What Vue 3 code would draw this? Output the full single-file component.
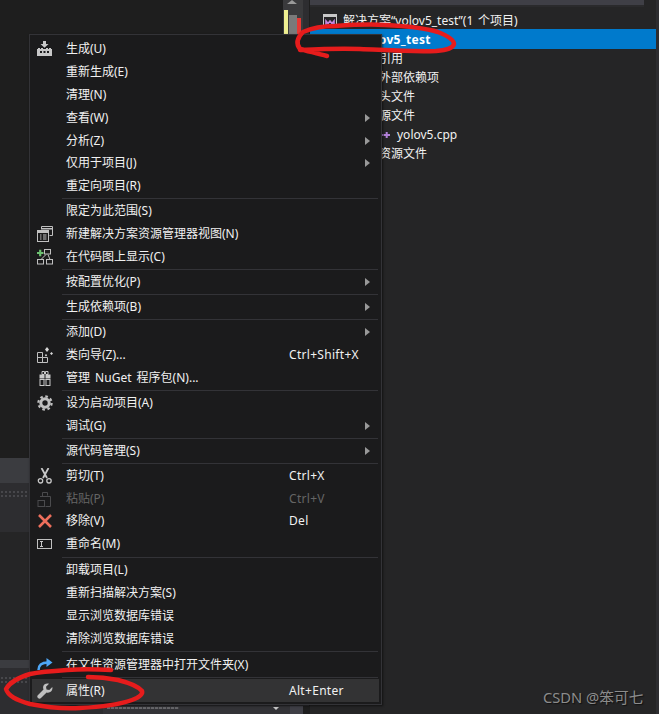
<script setup>
const groups = [
  [
    { label: '生成(U)', icon: 'build' },
    { label: '重新生成(E)' },
    { label: '清理(N)' },
    { label: '查看(W)', sub: true },
    { label: '分析(Z)', sub: true },
    { label: '仅用于项目(J)', sub: true },
    { label: '重定向项目(R)' },
  ],
  [
    { label: '限定为此范围(S)' },
    { label: '新建解决方案资源管理器视图(N)', icon: 'view' },
    { label: '在代码图上显示(C)', icon: 'map' },
  ],
  [{ label: '按配置优化(P)', sub: true }],
  [{ label: '生成依赖项(B)', sub: true }],
  [
    { label: '添加(D)', sub: true },
    { label: '类向导(Z)...', icon: 'wizard', key: 'Ctrl+Shift+X' },
    { label: '管理 NuGet 程序包(N)...', icon: 'gift' },
  ],
  [
    { label: '设为启动项目(A)', icon: 'gear' },
    { label: '调试(G)', sub: true },
  ],
  [{ label: '源代码管理(S)', sub: true }],
  [
    { label: '剪切(T)', icon: 'cut', key: 'Ctrl+X' },
    { label: '粘贴(P)', icon: 'paste', key: 'Ctrl+V', disabled: true },
    { label: '移除(V)', icon: 'remove', key: 'Del' },
    { label: '重命名(M)', icon: 'rename' },
  ],
  [
    { label: '卸载项目(L)' },
    { label: '重新扫描解决方案(S)' },
    { label: '显示浏览数据库错误' },
    { label: '清除浏览数据库错误' },
  ],
  [{ label: '在文件资源管理器中打开文件夹(X)', icon: 'open' }],
  [{ label: '属性(R)', icon: 'wrench', key: 'Alt+Enter', active: true }],
]

const tree = [
  { label: '解决方案“volov5_test”(1 个项目)', cls: 'solution', icon: 'sln' },
  { label: 'yolov5_test', cls: 'project', icon: 'proj' },
  { label: '引用', cls: 'child' },
  { label: '外部依赖项', cls: 'child' },
  { label: '头文件', cls: 'child' },
  { label: '源文件', cls: 'child' },
  { label: 'yolov5.cpp', cls: 'cpp', icon: 'cpp' },
  { label: '资源文件', cls: 'child' },
]
</script>

<template>
  <div class="app">
    <div class="left">
      <div class="editor-row">
        <div class="editor"></div>
        <div class="scroll">
          <span class="scroll-up"></span>
          <span class="mark yellow"></span>
          <span class="mark grey"></span>
          <span class="mark red"></span>
        </div>
        <div class="scroll-gap"></div>
      </div>
      <div class="tab-light tall"></div>
      <div class="panel-mid"><div class="dots"></div></div>
      <div class="panel-dark"></div>
      <div class="tab-light short"></div>
      <div class="panel-end">
        <div class="dots second"></div>
        <div class="combo-row">
          <div class="combo">
            <span class="combo-text"></span>
            <span class="combo-arrow"></span>
          </div>
          <div class="combo-btn"></div>
          <div class="combo-gap"></div>
        </div>
      </div>
    </div>

    <div class="explorer">
      <div class="explorer-top"></div>
      <div class="tree">
        <div v-for="row in tree" :key="row.label" class="tree-row" :class="row.cls">
          <svg v-if="row.icon === 'sln'" class="tree-icon" width="14" height="14" viewBox="0 0 14 14">
            <rect x="0.5" y="0.5" width="13" height="13" fill="#252526" stroke="#c8c8c8" />
            <rect x="0.5" y="0.5" width="13" height="2.5" fill="#c8c8c8" />
            <path d="M3 12V7l2 2.5L7 7l2 2.5L11 7v5" fill="none" stroke="#c586e0" stroke-width="1.6" />
          </svg>
          <svg v-else-if="row.icon === 'proj'" class="tree-icon" width="16" height="16" viewBox="0 0 16 16">
            <rect x="0.5" y="3.5" width="15" height="12" fill="#0e6ab0" stroke="#26262a" />
            <rect x="1" y="3" width="14" height="1.5" fill="#c586c0" />
          </svg>
          <svg v-else-if="row.icon === 'cpp'" class="tree-icon" width="16" height="16" viewBox="0 0 16 16">
            <path d="M1 8h4M3 6v4M5.5 8h6.5M8.7 5v6" stroke="#b180d7" stroke-width="2" fill="none" />
          </svg>
          <span class="tree-label">{{ row.label }}</span>
        </div>
      </div>
    </div>

    <div class="menu">
      <template v-for="(group, gi) in groups" :key="gi">
        <div v-if="gi > 0" class="sep" :class="{ wide: gi >= 8 }"></div>
        <div
          v-for="item in group"
          :key="item.label"
          class="item"
          :class="{ active: item.active, disabled: item.disabled }"
        >
          <span class="ico">
            <svg v-if="item.icon === 'build'" width="16" height="16" viewBox="0 0 16 16">
              <path d="M6 0h3v3h2.5L7.5 6.8 3.5 3H6z" fill="#c8c8c8" />
              <path d="M0 8h1V7h2v1h1V7h2v1h3V7h2v1h1V7h2v1h1v7H0z" fill="#c8c8c8" />
              <rect x="3" y="10" width="2" height="2" fill="#1b1b1c" />
              <rect x="6.5" y="10" width="2" height="2" fill="#1b1b1c" />
              <rect x="10" y="10" width="2" height="2" fill="#1b1b1c" />
            </svg>
            <svg v-else-if="item.icon === 'view'" width="16" height="16" viewBox="0 0 16 16">
              <path d="M4.5 3.5V.5h11v9h-3" fill="none" stroke="#c0c0c0" />
              <rect x="5" y="2" width="10" height="1.5" fill="#c0c0c0" />
              <rect x="0.5" y="4.5" width="11" height="11" fill="#1b1b1c" stroke="#c0c0c0" />
              <rect x="1" y="5" width="10" height="2" fill="#c0c0c0" />
              <path d="M3 9h1.5M6 9h3.5M3 11h1.5M6 11h3.5M3 13h1.5M6 13h3.5" stroke="#c0c0c0" />
            </svg>
            <svg v-else-if="item.icon === 'map'" width="16" height="16" viewBox="0 0 16 16">
              <path d="M0 4h6.5M3.2 .8v6.4" stroke="#6cc070" stroke-width="2.2" />
              <rect x="7.5" y="0.5" width="6" height="4.5" fill="none" stroke="#c0c0c0" />
              <rect x="0.5" y="10.5" width="6" height="4.5" fill="none" stroke="#c0c0c0" />
              <rect x="9.5" y="10.5" width="6" height="4.5" fill="none" stroke="#c0c0c0" />
              <path d="M9 5.5 4 10.5M11 5.5l2 5" fill="none" stroke="#c0c0c0" />
            </svg>
            <svg v-else-if="item.icon === 'wizard'" width="16" height="16" viewBox="0 0 16 16">
              <path d="M.5 15.5v-10h5v5h5v5zM.5 10.5h5v5" fill="none" stroke="#c0c0c0" />
              <path d="M10 0l2 2.5L10 5 8 2.5zM14.5 5l1.5 1.5-1.5 1.5L13 6.5zM9 7l1.2 1.2L9 9.4 7.8 8.2z" fill="#d8d8d8" />
            </svg>
            <svg v-else-if="item.icon === 'gift'" width="16" height="16" viewBox="0 0 16 16">
              <path d="M5 1.5h2.5v3H5zM8.5 1.5H11v3H8.5z" fill="none" stroke="#c8c8c8" />
              <rect x="2.5" y="4.5" width="11" height="4" fill="#c8c8c8" />
              <rect x="3" y="9.5" width="10" height="6" fill="none" stroke="#c8c8c8" />
              <path d="M8 4v12" stroke="#1b1b1c" />
              <path d="M7 9v6.5M9 9v6.5" stroke="#c8c8c8" />
            </svg>
            <svg v-else-if="item.icon === 'gear'" width="16" height="16" viewBox="0 0 16 16">
              <circle cx="8" cy="8" r="4.2" fill="none" stroke="#c0c0c0" stroke-width="3" />
              <circle cx="8" cy="8" r="6.6" fill="none" stroke="#c0c0c0" stroke-width="2.2" stroke-dasharray="2.6 2.6" />
            </svg>
            <svg v-else-if="item.icon === 'cut'" width="16" height="16" viewBox="0 0 16 16">
              <path d="M4.5 0 10 10M11.5 0 6 10" fill="none" stroke="#c8c8c8" stroke-width="1.8" />
              <circle cx="3.5" cy="12.8" r="2.2" fill="none" stroke="#c8c8c8" stroke-width="1.3" />
              <circle cx="12" cy="12.8" r="2.2" fill="none" stroke="#c8c8c8" stroke-width="1.3" />
            </svg>
            <svg v-else-if="item.icon === 'paste'" width="16" height="16" viewBox="0 0 16 16">
              <path d="M5.5 5.5v-4h5v3M3 5.5h10.500v10h-5" fill="none" stroke="#4b4b4d" />
              <rect x="1" y="9.500" width="6.500" height="6" fill="none" stroke="#4b4b4d" />
            </svg>
            <svg v-else-if="item.icon === 'remove'" width="16" height="16" viewBox="0 0 16 16">
              <path d="M2 2l12 12M14 2 2 14" stroke="#ee6f5c" stroke-width="2.600" />
            </svg>
            <svg v-else-if="item.icon === 'rename'" width="16" height="16" viewBox="0 0 16 16">
              <rect x="0.500" y="3.500" width="14" height="9" fill="none" stroke="#c0c0c0" />
              <path d="M3 5.500h3M3 10.500h3M4.500 5.500v5" stroke="#c8c8c8" />
            </svg>
            <svg v-else-if="item.icon === 'open'" width="16" height="16" viewBox="0 0 16 16">
              <path d="M1.500 13C1.500 8 5 5.500 11 5.500" fill="none" stroke="#4ea6f5" stroke-width="2.500" />
              <path d="M9.500 1 15.500 5.500 9.500 10z" fill="#4ea6f5" />
            </svg>
            <svg v-else-if="item.icon === 'wrench'" width="16" height="16" viewBox="0 0 16 16">
              <path d="M15.300 4 12.300 7 9.500 6.500 9 3.700 12 .7C9.500-.2 6.700 1 6.200 3.500 6 4.600 6.100 5.500 6.500 6.400L1 12a2.100 2.100 0 0 0 3 3l5.600-5.500c2.800 1 6.700-1.200 5.700-5.500z" fill="#c0c0c0" />
            </svg>
          </span>
          <span class="label">{{ item.label }}</span>
          <span v-if="item.key" class="key">{{ item.key }}</span>
          <span v-if="item.sub" class="arrow"></span>
        </div>
      </template>
    </div>

    <svg class="ink" width="659" height="714" viewBox="0 0 659 714">
      <path d="M327 56C316 53 307 51 300 49C296 44 297 38 303 32C312 28 322 26 335 26C350 25 368 24 385 25C405 26 425 28 438 32C448 36 454 40 454 44C453 48 448 50 436 51C410 52 385 50 360 49C340 48 320 49 300 50" />
      <path d="M111 670C95 669 80 669 67 670C52 671 40 672 30 674C20 677 10 682 6 689C8 696 16 700 30 704C45 707 60 709 80 708C100 707 118 705 132 700C140 697 143 694 142 691C138 686 130 683 118 680C108 678 98 677 88 677" />
    </svg>

    <div class="watermark">CSDN @笨可七</div>
  </div>
</template>

<style scoped>
.app {
  position: relative;
  width: 659px;
  height: 714px;
  overflow: hidden;
  display: flex;
  background: #252526;
  font-family: "Noto Sans", "Noto Sans CJK SC", sans-serif;
  font-size: 12px;
}
.left {
  width: 310px;
  height: 714px;
  display: flex;
  flex-direction: column;
  flex: none;
}
.editor-row {
  height: 458px;
  display: flex;
  flex: none;
}
.editor {
  width: 283px;
  background: #1e1e1e;
}
.scroll {
  width: 20px;
  position: relative;
  background: #3a3a3c;
}
.scroll-up {
  position: absolute;
  left: 4px;
  top: 0;
  border-left: 5px solid transparent;
  border-right: 5px solid transparent;
  border-bottom: 4px solid #9a9a9a;
}
.mark {
  position: absolute;
  bottom: 0;
  display: block;
}
.yellow {
  left: 1px;
  width: 4px;
  top: 10px;
  background: #efef91;
}
.grey {
  left: 6px;
  width: 8px;
  top: 15px;
  background: #7a7a7a;
}
.red {
  left: 14px;
  width: 4px;
  top: 18px;
  background: #e53935;
}
.scroll-gap {
  width: 7px;
  background: #1e1e1e;
  border-left: 6px solid #2d2d30;
  box-sizing: border-box;
}
.tab-light {
  background: #3b3c40;
  flex: none;
}
.tall {
  height: 25px;
}
.short {
  height: 8px;
}
.panel-mid {
  height: 49px;
  background: #2d2d30;
  padding-top: 7px;
  box-sizing: border-box;
  flex: none;
}
.panel-dark {
  height: 128px;
  background: #252526;
  flex: none;
}
.panel-end {
  flex: 1;
  background: #2d2d30;
  display: flex;
  flex-direction: column;
  justify-content: space-between;
  padding-top: 8px;
  box-sizing: border-box;
}
.dots {
  height: 8px;
  background-image: radial-gradient(circle, #47474b 0.8px, transparent 1.1px);
  background-size: 4px 4px;
}
.combo-row {
  height: 8px;
  display: flex;
  padding-left: 103px;
}
.combo {
  width: 187px;
  background: #333337;
  position: relative;
  overflow: hidden;
}
.combo-text {
  position: absolute;
  left: 4px;
  top: 1px;
  width: 72px;
  height: 2px;
  background: repeating-linear-gradient(90deg, #66666a 0 3px, #3f3f43 3px 4px);
}
.combo-arrow {
  position: absolute;
  left: 170px;
  top: 1px;
  border-left: 3px solid transparent;
  border-right: 3px solid transparent;
  border-top: 3px solid #c8c8c8;
}
.combo-btn {
  width: 13px;
  background: #3f3f46;
}
.combo-gap {
  width: 7px;
  background: #1e1e1e;
}

.explorer {
  flex: 1;
  height: 714px;
  background: #252526;
  border-left: 1px solid #1e1e1e;
  box-sizing: border-box;
  margin-left: -1px;
  border-right: 3px solid #2d2d30;
}
.explorer-top {
  height: 5px;
  margin-right: 12px;
  background: #3f3f46;
  border-bottom: 2px solid #2a2a2c;
}
.tree {
  padding-top: 3px;
}
.tree-row {
  height: 19px;
  display: flex;
  align-items: center;
  color: #f1f1f1;
  white-space: nowrap;
  box-sizing: border-box;
}
.tree-icon {
  flex: none;
}
.solution {
  padding-left: 13px;
  padding-top: 2px;
  gap: 6px;
}
.project {
  height: 20px;
  padding-left: 30px;
  gap: 4px;
  background: #007acc;
  color: #fff;
  font-weight: 700;
  letter-spacing: 0.3px;
}
.child {
  padding-left: 69px;
}
.cpp {
  padding-left: 68px;
  gap: 3px;
}
.tree-label {
  line-height: 19px;
  word-spacing: 1.5px;
}

.menu {
  position: absolute;
  left: 29px;
  top: 34px;
  width: 353px;
  box-sizing: border-box;
  background: #1b1b1c;
  border: 1px solid #333337;
  padding: 2.5px 2px 2px;
  box-shadow: 1px 1px 2px rgba(0, 0, 0, 0.55);
}
.item {
  height: 22.9px;
  display: flex;
  align-items: center;
  padding: 0 9px 0 5px;
  color: #f1f1f1;
  white-space: nowrap;
}
.item.active {
  background: #333334;
}
.item.disabled {
  color: #656565;
}
.ico {
  width: 16px;
  height: 16px;
  flex: none;
  margin-right: 13px;
  display: block;
}
.ico svg {
  display: block;
}
.label {
  width: 223px;
  flex: none;
  line-height: 18px;
  word-spacing: 2px;
}
.key {
  line-height: 18px;
  letter-spacing: 0.3px;
}
.arrow {
  margin-left: auto;
  border-left: 5px solid #999;
  border-top: 4.5px solid transparent;
  border-bottom: 4.5px solid transparent;
}
.sep {
  height: 1px;
  margin: 0.55px 1px 0.55px 30px;
  background: #333337;
}
.sep.wide {
  margin-top: 1.05px;
  margin-bottom: 1.05px;
}

.ink {
  position: absolute;
  left: 0;
  top: 0;
  pointer-events: none;
  fill: none;
  stroke: #e61c1c;
  stroke-width: 4.5;
  stroke-linecap: round;
  stroke-linejoin: round;
}
.watermark {
  position: absolute;
  left: 543px;
  top: 687px;
  font-size: 14.7px;
  line-height: 20px;
  color: #8c8c8c;
  text-shadow: 1px 1px 1px #111;
  white-space: nowrap;
}
</style>
